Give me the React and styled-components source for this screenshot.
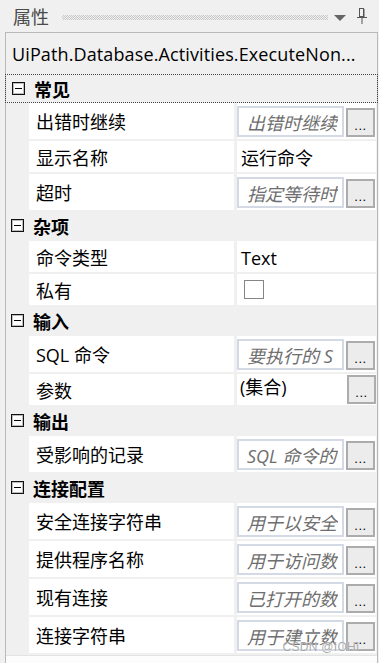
import React from "react";
import styled, { createGlobalStyle } from "styled-components";

const GlobalStyle = createGlobalStyle`
  html, body {
    margin: 0;
    padding: 0;
    background: #f0f0f0;
  }
  body {
    font-family: "Open Sans", "Noto Sans CJK SC", sans-serif;
    font-size: 18px;
    color: #000;
  }
`;

const Page = styled.div`
  position: relative;
  width: 379px;
  height: 663px;
  overflow: hidden;
  background: #f0f0f0;
  display: flex;
  flex-direction: column;
`;

const TitleBar = styled.div`
  height: 32px;
  display: flex;
  align-items: center;
  padding: 0 12px 0 13px;
  box-sizing: border-box;
`;

const Title = styled.span`
  font-family: "Noto Sans CJK SC", sans-serif;
  font-size: 18px;
  line-height: 20px;
  color: #4a4a4a;
`;

const Gripper = styled.div`
  flex: 1;
  height: 5px;
  margin: 2px 6px 0 13px;
  background-image: conic-gradient(#c9c9c9 25%, transparent 0 50%, #c9c9c9 0 75%, transparent 0);
  background-size: 2px 2px;
`;

const DropArrow = styled.span`
  width: 0;
  height: 0;
  margin: 3px 11px 0 0;
  border-left: 6px solid transparent;
  border-right: 6px solid transparent;
  border-top: 6px solid #666;
`;

const PinIcon = () => (
  <svg width="10" height="16" viewBox="0 0 10 16">
    <rect x="2.5" y="0.5" width="4" height="8" fill="none" stroke="#555" />
    <rect x="6" y="1" width="1.5" height="8" fill="#555" />
    <rect x="0" y="9" width="10" height="1" fill="#555" />
    <rect x="4.5" y="10" width="1" height="6" fill="#555" />
  </svg>
);

const Panel = styled.div`
  flex: 1;
  margin-left: 5px;
  width: 373px;
  box-sizing: border-box;
  border: 1px solid #b9b9b9;
  border-bottom: none;
  display: flex;
  flex-direction: column;
`;

const ObjectName = styled.div`
  height: 41px;
  padding-left: 6px;
  display: flex;
  align-items: center;
  font-size: 18px;
  letter-spacing: 0.12px;
  white-space: nowrap;
  overflow: hidden;
`;

const CategoryHeader = styled.div`
  height: ${({ $focused }) => ($focused ? "29px" : "31px")};
  box-sizing: border-box;
  margin: 0 ${({ $focused }) => ($focused ? "-1px" : "0")};
  padding-left: ${({ $focused }) => ($focused ? "6px" : "5px")};
  border: ${({ $focused }) => ($focused ? "1px dotted #444" : "none")};
  display: flex;
  align-items: center;
`;

const Expander = styled.span`
  position: relative;
  width: 13px;
  height: 13px;
  box-sizing: border-box;
  border: 1px solid #111;
  box-shadow: inset 0 0 0 1px #bdbdbd;
  background: #fff;
  &::after {
    content: "";
    position: absolute;
    left: 2px;
    top: 5px;
    width: 7px;
    height: 1px;
    background: #000;
  }
`;

const CategoryName = styled.span`
  margin-left: 9px;
  font-family: "Noto Sans CJK SC", sans-serif;
  font-weight: 700;
  font-size: 18px;
  line-height: 20px;
`;

const Rows = styled.div`
  display: flex;
  flex-direction: column;
  gap: 2px;
`;

const Row = styled.div`
  height: ${({ $tall }) => ($tall ? "36px" : "31px")};
  margin: 0 1px 0 23px;
  display: flex;
  gap: 3px;
`;

const Label = styled.div`
  width: 205px;
  flex: none;
  background: #fff;
  padding: 2px 0 0 7px;
  box-sizing: border-box;
  display: flex;
  align-items: center;
  font-size: 18px;
  line-height: 20px;
  white-space: nowrap;
`;

const Value = styled.div`
  flex: 1;
  min-width: 0;
  background: #fff;
  display: flex;
  align-items: center;
  gap: 2px;
  padding-left: ${({ $inset }) => $inset || "0"};
  font-size: 18px;
  line-height: 20px;
  white-space: nowrap;
`;

const ValueText = styled.span`
  flex: 1;
  align-self: ${({ $top }) => ($top ? "flex-start" : "center")};
  margin-top: ${({ $top }) => ($top ? "3px" : "2px")};
`;

const EditorBox = styled.div`
  width: 107px;
  height: 31px;
  flex: none;
  margin-top: 1px;
  box-sizing: border-box;
  border: 2px solid #d3dae6;
  background: #fff;
  padding: 2px 0 0 8px;
  display: flex;
  align-items: center;
`;

const Hint = styled.span`
  display: block;
  width: 91px;
  overflow: hidden;
  white-space: nowrap;
  font-style: italic;
  color: #6e6e6e;
`;

const EllipsisButton = styled.div`
  width: 29px;
  height: 29px;
  flex: none;
  margin-top: ${({ $flush }) => ($flush ? "0" : "3px")};
  box-sizing: border-box;
  border: 2px solid #acacac;
  background: #ececec;
  display: flex;
  justify-content: center;
  align-items: flex-end;
  padding-bottom: 5px;
  font-family: "Liberation Sans", sans-serif;
  font-size: 13px;
  line-height: 8px;
  letter-spacing: 0.5px;
  color: #000;
`;

const CheckBox = styled.span`
  width: 20px;
  height: 19px;
  box-sizing: border-box;
  border: 1px solid #858585;
  background: #fff;
`;

const Description = styled.div`
  flex: 1;
  margin-top: 2px;
  border-top: 1px solid #e3e3e3;
  background: #fcfcfc;
`;

const Watermark = styled.span`
  position: absolute;
  right: 16px;
  bottom: 9px;
  font-family: "Liberation Sans", sans-serif;
  font-size: 12px;
  letter-spacing: 0.3px;
  color: rgba(140, 140, 140, 0.75);
  text-shadow: 0 0 1px #fff;
`;

const categories = [
  {
    name: "常见",
    focused: true,
    rows: [
      { label: "出错时继续", kind: "editor", hint: "出错时继续" },
      { label: "显示名称", kind: "text", value: "运行命令" },
      { label: "超时", kind: "editor", hint: "指定等待时" },
    ],
  },
  {
    name: "杂项",
    rows: [
      { label: "命令类型", kind: "text", value: "Text" },
      { label: "私有", kind: "check" },
    ],
  },
  {
    name: "输入",
    rows: [
      { label: "SQL 命令", kind: "editor", hint: "要执行的 S" },
      { label: "参数", kind: "collection", value: "(集合)" },
    ],
  },
  {
    name: "输出",
    rows: [{ label: "受影响的记录", kind: "editor", hint: "SQL 命令的" }],
  },
  {
    name: "连接配置",
    rows: [
      { label: "安全连接字符串", kind: "editor", hint: "用于以安全" },
      { label: "提供程序名称", kind: "editor", hint: "用于访问数" },
      { label: "现有连接", kind: "editor", hint: "已打开的数" },
      { label: "连接字符串", kind: "editor", hint: "用于建立数" },
    ],
  },
];

const PropertyValue = ({ row }) => {
  if (row.kind === "editor") {
    return (
      <Value>
        <EditorBox>
          <Hint>{row.hint}</Hint>
        </EditorBox>
        <EllipsisButton>...</EllipsisButton>
      </Value>
    );
  }
  if (row.kind === "check") {
    return (
      <Value $inset="7px">
        <CheckBox />
      </Value>
    );
  }
  if (row.kind === "collection") {
    return (
      <Value $inset="3px">
        <ValueText $top>{row.value}</ValueText>
        <EllipsisButton $flush>...</EllipsisButton>
      </Value>
    );
  }
  return (
    <Value $inset="4px">
      <ValueText>{row.value}</ValueText>
    </Value>
  );
};

export default function App() {
  return (
    <Page>
      <GlobalStyle />
      <TitleBar>
        <Title>属性</Title>
        <Gripper />
        <DropArrow />
        <PinIcon />
      </TitleBar>
      <Panel>
        <ObjectName>UiPath.Database.Activities.ExecuteNon...</ObjectName>
        {categories.map((cat) => (
          <React.Fragment key={cat.name}>
            <CategoryHeader $focused={cat.focused}>
              <Expander />
              <CategoryName>{cat.name}</CategoryName>
            </CategoryHeader>
            <Rows>
              {cat.rows.map((row) => (
                <Row key={row.label} $tall={row.kind === "editor"}>
                  <Label>{row.label}</Label>
                  <PropertyValue row={row} />
                </Row>
              ))}
            </Rows>
          </React.Fragment>
        ))}
        <Description />
      </Panel>
      <Watermark>CSDN @IOHL</Watermark>
    </Page>
  );
}
